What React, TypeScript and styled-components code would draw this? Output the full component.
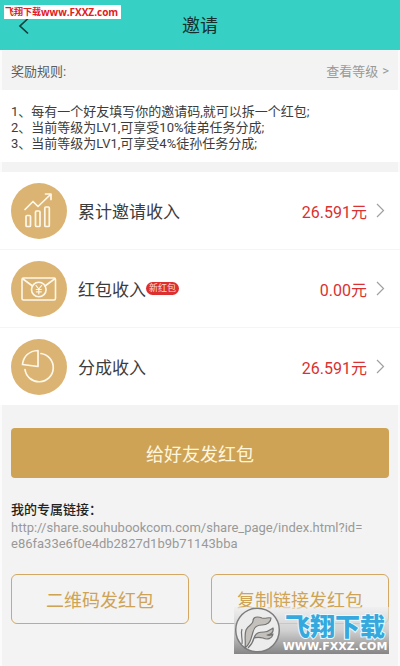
import React from "react";
import styled, { createGlobalStyle } from "styled-components";

const GlobalStyle = createGlobalStyle`
  * { box-sizing: border-box; }
  body {
    margin: 0;
    background: #f3f3f3;
    font-family: Roboto, "Noto Sans CJK SC", sans-serif;
    color: #3c3c3c;
  }
  h1, h2, p, ol, ul { margin: 0; padding: 0; font-weight: 400; }
  button { font-family: inherit; cursor: pointer; }
`;

const Page = styled.main`
  position: relative;
  min-height: 100vh;
  border: solid #fbfbfb;
  border-width: 0 2px;
`;

const Header = styled.header`
  display: grid;
  grid-template-columns: 48px 1fr 48px;
  align-items: center;
  height: 50px;
  margin: 0 -2px;
  padding-top: 2px;
  background: #36d1c4;
`;

const BackButton = styled.button`
  display: flex;
  padding: 0 0 0 18px;
  border: 0;
  background: none;
  color: #143f3c;
`;

const Title = styled.h1`
  font-size: 18px;
  line-height: 24px;
  text-align: center;
  color: #16302e;
`;

const SiteTag = styled.div`
  position: absolute;
  top: 5px;
  left: 2px;
  display: flex;
  align-items: center;
  justify-content: space-between;
  width: 117px;
  height: 14px;
  padding: 0 3px 0 1px;
  background: #fff;
  color: #e0201c;
  font: 700 9px/14px "Open Sans", "Noto Sans CJK SC", sans-serif;
  white-space: nowrap;
`;

const SiteTagUrl = styled.span`
  font-size: 10px;
`;

const RulesBar = styled.div`
  display: flex;
  align-items: center;
  justify-content: space-between;
  height: 40px;
  padding: 0 9px;
  font-size: 13px;
`;

const RulesTitle = styled.h2`
  font-size: 13px;
  color: #5c5c5c;
`;

const LevelLink = styled.a`
  display: flex;
  align-items: center;
  gap: 4px;
  color: #999;
  text-decoration: none;
`;

const Rules = styled.ul`
  margin: 0 -2px;
  padding: 14px 11px 10px;
  background: #fff;
  list-style: none;
  font-size: 13px;
  line-height: 16px;
`;

const IncomeList = styled.ul`
  margin: 10px -2px 0;
  background: #fff;
  list-style: none;
`;

const IncomeItem = styled.li`
  & + & { border-top: 1px solid #f5f5f5; }
`;

const IncomeLink = styled.a`
  display: flex;
  align-items: center;
  height: 77px;
  padding: 0 15px 0 11px;
  color: inherit;
  text-decoration: none;
  font-size: 17px;
`;

const IconDisc = styled.span`
  display: flex;
  flex: none;
  width: 56px;
  height: 56px;
  margin-right: 11px;
  border-radius: 50%;
  background: #dbb473;
`;

const NewBadge = styled.span`
  padding: 0 3px;
  border-radius: 7px;
  background: #dc3030;
  color: #ffdcd4;
  font-size: 9px;
  line-height: 13px;
`;

const Amount = styled.span`
  margin: 0 9px 0 auto;
  color: #d83232;
  font-size: 16px;
`;

const Actions = styled.section`
  padding: 23px 9px 43px;
`;

const Button = styled.button<{ $solid?: boolean }>`
  width: 100%;
  height: 50px;
  padding: 0;
  border: ${(p) => (p.$solid ? "0" : "1px solid #d2a862")};
  border-radius: ${(p) => (p.$solid ? "4px" : "6px")};
  background: ${(p) => (p.$solid ? "#cfa355" : "transparent")};
  color: ${(p) => (p.$solid ? "#fff6df" : "#cfa355")};
  font-size: 18px;
`;

const LinkTitle = styled.h2`
  margin-top: 22px;
  font-size: 13px;
  font-weight: 500;
  line-height: 20px;
  color: #222;
`;

const ShareUrl = styled.p`
  font-size: 13px;
  line-height: 16px;
  color: #999;
  overflow-wrap: break-word;
`;

const ButtonRow = styled.div`
  position: relative;
  display: grid;
  grid-template-columns: 1fr 1fr;
  gap: 22px;
  margin-top: 22px;
`;

const Watermark = styled.div`
  position: absolute;
  top: 33px;
  right: 0;
  display: flex;
  align-items: center;
  width: 155px;
  height: 47px;
  background: linear-gradient(#eeeeee99, #c8c8c8cc 50%, #858585);
  pointer-events: none;
`;

const WatermarkText = styled.div`
  display: flex;
  flex-direction: column;
  align-items: center;
  width: 106px;
  white-space: nowrap;
`;

const WatermarkName = styled.span`
  font: 900 25px/32px "Noto Sans CJK SC", sans-serif;
  color: #35a9dd;
  -webkit-text-stroke: 2px #e9f8ff;
  paint-order: stroke fill;
`;

const WatermarkSite = styled.span`
  font: 700 11px/12px "DejaVu Sans", sans-serif;
  color: #fff;
`;

const GrowthIcon = () => (
  <svg width="56" height="56" viewBox="0 0 56 56" fill="none" stroke="#fff8ea" strokeWidth="1.7" strokeLinecap="round" strokeLinejoin="round" aria-hidden="true">
    <path d="M14 26.500 22 18.500 27 23.500 39.500 11.500M34.500 11H40V16.500" />
    <rect x="15" y="32.500" width="4.500" height="11" rx="1" />
    <rect x="24.500" y="28" width="4.500" height="15.500" rx="1" />
    <rect x="33.800" y="24" width="4.500" height="19.500" rx="1" />
  </svg>
);

const EnvelopeIcon = () => (
  <svg width="56" height="56" viewBox="0 0 56 56" fill="none" stroke="#fff8ea" strokeWidth="1.6" strokeLinecap="round" strokeLinejoin="round" aria-hidden="true">
    <rect x="11" y="17" width="33.500" height="22" rx="1.500" />
    <path d="M12 18 21.500 25M43.500 18 34 25" />
    <circle cx="27.800" cy="28.500" r="7.300" />
    <path d="M25 24.500 27.800 28 30.600 24.500M27.800 28V33M25.300 28.500H30.300M25.300 30.800H30.300" strokeWidth="1.200" />
  </svg>
);

const PieIcon = () => (
  <svg width="56" height="56" viewBox="0 0 56 56" fill="none" stroke="#fff8ea" strokeWidth="1.7" strokeLinecap="round" strokeLinejoin="round" aria-hidden="true">
    <path d="M30 14.500A14.200 14.200 0 1 1 14 30.500" />
    <path d="M27 11.500V27.500L11.500 25.500C12.500 17.500 18 12 27 11.500Z" />
  </svg>
);

const Chevron = () => (
  <svg width="9" height="15" viewBox="0 0 9 15" fill="none" stroke="#a0a0a0" strokeWidth="1.2" aria-hidden="true">
    <path d="M1 1 7.500 7.500 1 14" />
  </svg>
);

const WatermarkLogo = () => (
  <svg width="48" height="47" viewBox="0 0 48 47" aria-hidden="true">
    <circle cx="23.500" cy="23" r="21.800" fill="#ececec" stroke="#7c7c7c" strokeWidth="1.500" />
    <g fill="#c4c1bc" stroke="#747474" strokeWidth="1.200" strokeLinejoin="round">
      <path d="M11 41C12 34 10 29 12 23C14 18 19 18 19 14C19 10 23 9 28 11C32 12 34 10 37 11C37 15 33 18 28 18C23 18 20 20 19 25C17 32 16 37 11 41Z" />
      <path d="M20 31C22 25 26 25 30 25C34 25 36 23 39 21C40 25 37 28 33 28C36 29 37 28 39 27C38 32 33 33 29 31C25 30 23 30 20 31Z" />
      <path d="M8 22C6 27 9 31 8 37" fill="none" />
      <path d="M20 31C19 35 17 38 14 41" fill="none" />
    </g>
  </svg>
);

const rules = [
  "1、每有一个好友填写你的邀请码,就可以拆一个红包;",
  "2、当前等级为LV1,可享受10%徒弟任务分成;",
  "3、当前等级为LV1,可享受4%徒孙任务分成;",
];

const incomes = [
  { label: "累计邀请收入", amount: "26.591元", Icon: GrowthIcon },
  { label: "红包收入", amount: "0.00元", Icon: EnvelopeIcon, badge: "新红包" },
  { label: "分成收入", amount: "26.591元", Icon: PieIcon },
];

export default function App() {
  return (
    <>
      <GlobalStyle />
      <Page>
        <Header>
          <BackButton aria-label="返回">
            <svg width="12" height="18" viewBox="0 0 12 18" fill="none" stroke="currentColor" strokeWidth="1.7" aria-hidden="true">
              <path d="M10 1.500 2 9 10 16.500" />
            </svg>
          </BackButton>
          <Title>邀请</Title>
        </Header>
        <SiteTag>
          <span>飞翔下载</span>
          <SiteTagUrl>www.FXXZ.com</SiteTagUrl>
        </SiteTag>
        <RulesBar>
          <RulesTitle>奖励规则:</RulesTitle>
          <LevelLink href="#levels">
            <span>查看等级</span>
            <span>&gt;</span>
          </LevelLink>
        </RulesBar>
        <Rules>
          {rules.map((rule) => (
            <li key={rule}>{rule}</li>
          ))}
        </Rules>
        <IncomeList>
          {incomes.map(({ label, amount, Icon, badge }) => (
            <IncomeItem key={label}>
              <IncomeLink href="#income">
                <IconDisc>
                  <Icon />
                </IconDisc>
                <span>{label}</span>
                {badge && <NewBadge>{badge}</NewBadge>}
                <Amount>{amount}</Amount>
                <Chevron />
              </IncomeLink>
            </IncomeItem>
          ))}
        </IncomeList>
        <Actions>
          <Button $solid>给好友发红包</Button>
          <LinkTitle>我的专属链接：</LinkTitle>
          <ShareUrl>
            http://share.souhubookcom.com/share_page/index.html?id=
            <wbr />
            e86fa33e6f0e4db2827d1b9b71143bba
          </ShareUrl>
          <ButtonRow>
            <Button>二维码发红包</Button>
            <Button>复制链接发红包</Button>
            <Watermark>
              <WatermarkLogo />
              <WatermarkText>
                <WatermarkName>飞翔下载</WatermarkName>
                <WatermarkSite>WWW.FXXZ.COM</WatermarkSite>
              </WatermarkText>
            </Watermark>
          </ButtonRow>
        </Actions>
      </Page>
    </>
  );
}
